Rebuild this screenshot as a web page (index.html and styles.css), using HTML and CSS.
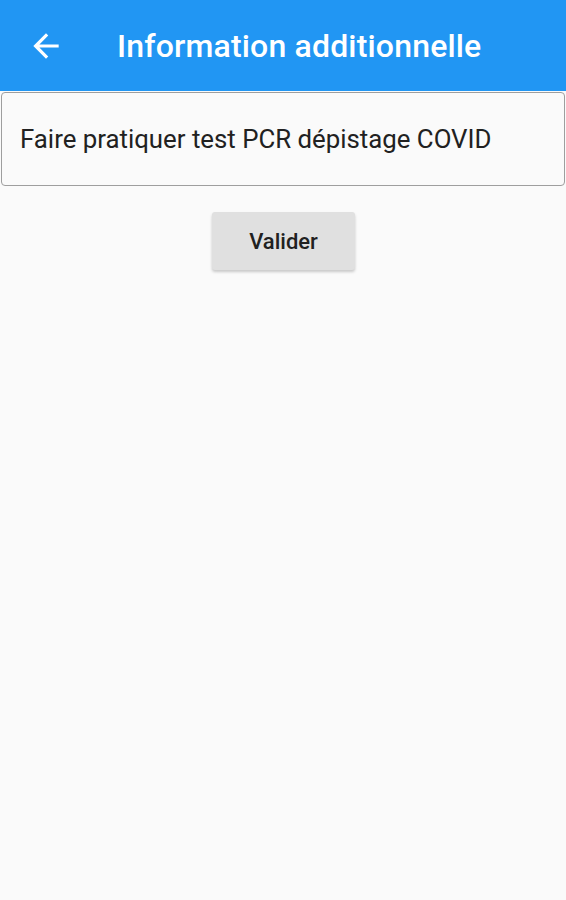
FILE: index.html
```html
<!DOCTYPE html>
<html lang="fr">
<head>
<meta charset="utf-8">
<link rel="stylesheet" href="styles.css">
</head>
<body>
<header class="appbar">
  <svg class="back" viewBox="0 0 24 24" width="38" height="38"><path d="M20 11H7.83l5.59-5.59L12 4l-8 8 8 8 1.41-1.41L7.83 13H20v-2z" fill="#fff"/></svg>
  <h1 class="title">Information additionnelle</h1>
</header>
<main class="content">
  <div class="field">Faire pratiquer test PCR dépistage COVID</div>
  <div class="actions"><button class="btn">Valider</button></div>
</main>
</body>
</html>
```
FILE: styles.css
```css
html, body { margin: 0; padding: 0; }
body { background: #fafafa; font-family: Roboto, "Noto Sans", sans-serif; width: 566px; height: 900px; overflow: hidden; }
.appbar { height: 91px; background: #2196f3; display: flex; align-items: center; box-sizing: border-box; padding-left: 27px; }
.back { display: block; flex: none; }
.title { margin: 0 0 0 52px; color: #fff; font-size: 32px; font-weight: 500; line-height: 1; letter-spacing: 0.17px; }
.content { padding: 1px 1px 0 1px; }
.field { height: 94px; box-sizing: border-box; border: 1px solid #9e9e9e; border-radius: 4px; background: #fafafa; padding: 0 0 0 18px; display: flex; align-items: center; font-size: 25.8px; color: #212121; }
.actions { display: flex; justify-content: center; padding-top: 26px; }
.btn { width: 143px; height: 58px; border: none; border-radius: 3px; background: #e0e0e0; box-shadow: 0 2px 3px rgba(0,0,0,0.2); font-family: Roboto, sans-serif; font-size: 22px; font-weight: 500; color: #212121; margin-left: 1px; padding: 0; }
```
